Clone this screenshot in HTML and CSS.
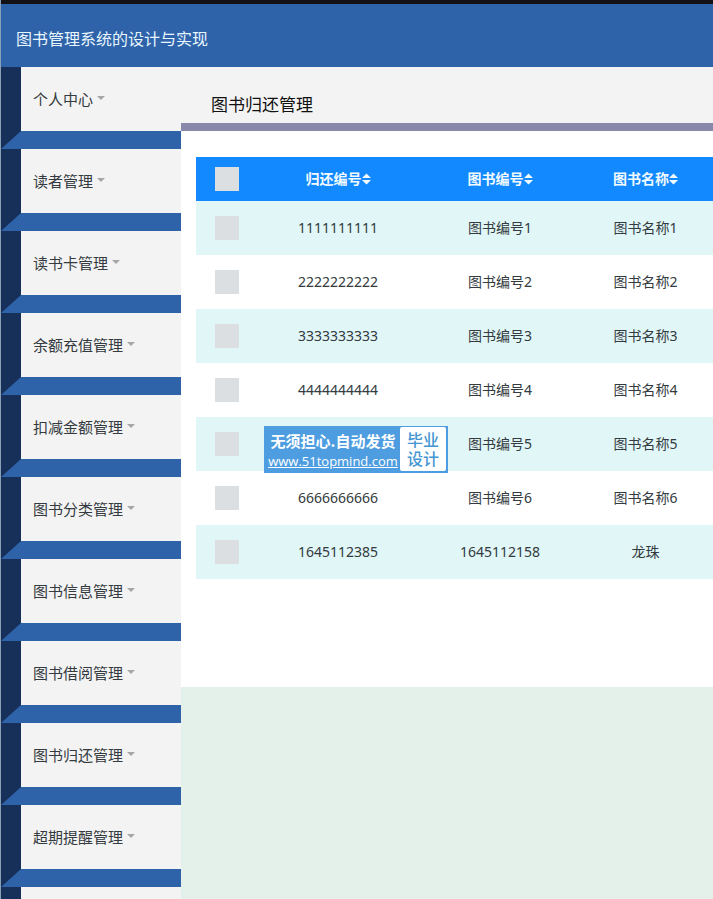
FILE: index.html
```html
<!DOCTYPE html>
<html lang="zh-CN">
<head>
  <meta charset="UTF-8">
  <title>图书管理系统的设计与实现</title>
  <meta name="viewport" content="width=device-width, initial-scale=1.0">
  <link rel="stylesheet" href="styles.css">
</head>
<body>
  <header class="navbar">
    <a class="brand" href="#">图书管理系统的设计与实现</a>
  </header>

  <div class="wrapper">
    <nav class="sidebar">
      <ul class="menu">
        <li><a href="#">个人中心<span class="caret"></span></a></li>
        <li><a href="#">读者管理<span class="caret"></span></a></li>
        <li><a href="#">读书卡管理<span class="caret"></span></a></li>
        <li><a href="#">余额充值管理<span class="caret"></span></a></li>
        <li><a href="#">扣减金额管理<span class="caret"></span></a></li>
        <li><a href="#">图书分类管理<span class="caret"></span></a></li>
        <li><a href="#">图书信息管理<span class="caret"></span></a></li>
        <li><a href="#">图书借阅管理<span class="caret"></span></a></li>
        <li><a href="#">图书归还管理<span class="caret"></span></a></li>
        <li><a href="#">超期提醒管理<span class="caret"></span></a></li>
        <li class="menu-end"></li>
      </ul>
    </nav>

    <main class="content">
      <h1 class="page-title">图书归还管理</h1>
      <section class="panel">
        <table class="list">
          <thead>
            <tr>
              <th class="col-check"><input type="checkbox" aria-label="全选"></th>
              <th class="col-id">归还编号<svg class="sort" viewBox="0 0 10 12"><path d="M5 0L10 5H0zM0 7H10L5 12z"/></svg></th>
              <th class="col-book">图书编号<svg class="sort" viewBox="0 0 10 12"><path d="M5 0L10 5H0zM0 7H10L5 12z"/></svg></th>
              <th class="col-name">图书名称<svg class="sort" viewBox="0 0 10 12"><path d="M5 0L10 5H0zM0 7H10L5 12z"/></svg></th>
            </tr>
          </thead>
          <tbody>
            <tr><td><input type="checkbox" aria-label="选择1111111111"></td><td>1111111111</td><td>图书编号1</td><td class="col-name">图书名称1</td></tr>
            <tr><td><input type="checkbox" aria-label="选择2222222222"></td><td>2222222222</td><td>图书编号2</td><td class="col-name">图书名称2</td></tr>
            <tr><td><input type="checkbox" aria-label="选择3333333333"></td><td>3333333333</td><td>图书编号3</td><td class="col-name">图书名称3</td></tr>
            <tr><td><input type="checkbox" aria-label="选择4444444444"></td><td>4444444444</td><td>图书编号4</td><td class="col-name">图书名称4</td></tr>
            <tr><td><input type="checkbox" aria-label="选择图书编号5"></td><td></td><td>图书编号5</td><td class="col-name">图书名称5</td></tr>
            <tr><td><input type="checkbox" aria-label="选择6666666666"></td><td>6666666666</td><td>图书编号6</td><td class="col-name">图书名称6</td></tr>
            <tr><td><input type="checkbox" aria-label="选择1645112385"></td><td>1645112385</td><td>1645112158</td><td class="col-name">龙珠</td></tr>
          </tbody>
        </table>

        <aside class="stamp">
          <div class="stamp-text">
            <span>无须担心.自动发货</span>
            <a href="#">www.51topmind.com</a>
          </div>
          <div class="stamp-box">毕业<br>设计</div>
        </aside>
      </section>
    </main>
  </div>
</body>
</html>
```

FILE: styles.css
```css
* {
  box-sizing: border-box;
}

body {
  margin: 0;
  min-height: 100vh;
  display: flex;
  flex-direction: column;
  font-family: "Noto Sans", "Noto Sans CJK SC", sans-serif;
  font-size: 14px;
  color: #333a40;
  background: #e4f0ea;
  border-left: 1px solid #8aa0b8;
}

a {
  color: inherit;
  text-decoration: none;
}

.navbar {
  padding: 24px 15px 19px;
  border-top: 4px solid #121214;
  background: #2f63a9;
  line-height: 20px;
}

.brand {
  display: block;
  font-family: "Noto Sans CJK SC", sans-serif;
  font-size: 16px;
  color: #e8f6ff;
}

.wrapper {
  flex: 1;
  display: flex;
}

/* sidebar */
.sidebar {
  flex: none;
  display: flex;
  width: 180px;
}

.menu {
  flex: 1;
  display: flex;
  flex-direction: column;
  list-style: none;
  margin: 0;
  padding: 0;
}

.menu li {
  background: #f3f3f3;
  border-left: 20px solid #17305a;
  border-bottom: 18px solid #2f63a9;
}

.menu .menu-end {
  flex: 1;
  border-bottom: 0;
}

.menu a {
  display: flex;
  align-items: center;
  gap: 4px;
  height: 64px;
  padding: 0 0 2px 12px;
  font-family: "Noto Sans CJK SC", sans-serif;
  font-size: 15px;
}

.caret {
  border-top: 4px solid #a6a6a6;
  border-left: 4px solid transparent;
  border-right: 4px solid transparent;
}

/* content */
.content {
  flex: 1;
  min-width: 0;
}

.page-title {
  margin: 0;
  padding: 25px 30px 7px;
  font-family: "Noto Sans CJK SC", sans-serif;
  font-size: 17px;
  font-weight: 400;
  line-height: 24px;
  color: #111;
  background: #f3f3f3;
  border-bottom: 8px solid #8888aa;
}

.panel {
  position: relative;
  padding: 26px 0 108px 15px;
  background: #fefffe;
}

.list {
  width: 100%;
  table-layout: fixed;
  border-collapse: collapse;
  text-align: center;
}

.list th,
.list td {
  height: 54px;
  padding: 0 0 2px;
}

.list th {
  height: 44px;
  color: #f0faff;
  background: #1389ff;
}

.list th:first-child,
.list td:first-child {
  padding-bottom: 0;
}

.list tbody tr:nth-child(odd) {
  background: #e1f6f7;
}

.col-check { width: 62px; }
.col-id { width: 160px; }
.col-book { width: 164px; }
.list .col-name { padding-right: 4px; }

.list input {
  appearance: none;
  display: block;
  width: 24px;
  height: 24px;
  margin: 0 auto;
  background: #dcdfe2;
}

.sort {
  width: 9px;
  height: 12px;
  fill: currentColor;
  vertical-align: -1px;
}

/* floating stamp over the table */
.stamp {
  position: absolute;
  top: 295px;
  left: 83px;
  display: flex;
  width: 184px;
  height: 47px;
  padding: 1px 2px 2px;
  background: #4d9de0;
  color: #fff;
}

.stamp-text {
  flex: 1;
  display: flex;
  flex-direction: column;
  align-items: center;
  padding-top: 3px;
  line-height: 21px;
  white-space: nowrap;
}

.stamp-text span {
  font-family: "Noto Sans CJK SC", sans-serif;
  font-size: 15px;
  font-weight: 700;
}

.stamp-text a {
  font-family: "Open Sans", sans-serif;
  font-size: 13px;
  font-weight: 500;
  text-decoration: underline;
}

.stamp-box {
  flex: none;
  width: 46px;
  padding-top: 3px;
  border-radius: 2px;
  background: #fff;
  color: #4596d2;
  font-family: "Noto Sans CJK SC", sans-serif;
  font-size: 16px;
  font-weight: 500;
  line-height: 19px;
  text-align: center;
}
```
